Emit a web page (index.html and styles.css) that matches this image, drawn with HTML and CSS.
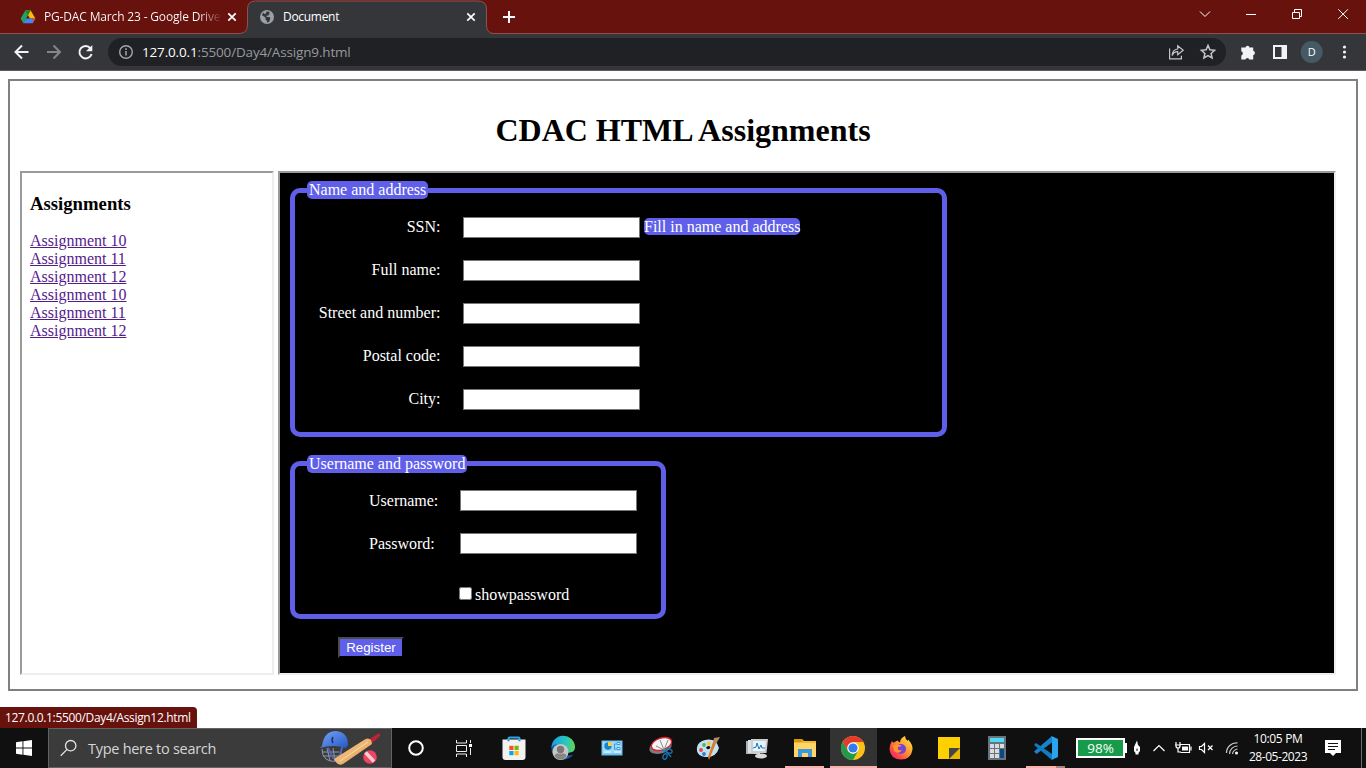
FILE: index.html
```html
<!DOCTYPE html>
<html lang="en">
<head>
<meta charset="utf-8">
<title>Document</title>
<link rel="stylesheet" href="styles.css">
</head>
<body>
<div class="screen">
  <header class="tabstrip">
    <div class="tab">
      <svg class="favicon" viewBox="0 0 16 16"><path d="M5.3 1.500h5.400l4.700 8.100H10z" fill="#fbbc04"/><path d="M3.300 14.200 5.900 9.600h9.500l-2.700 4.600z" fill="#4285f4"/><path d="M5.300 1.500 8 6.200 3.300 14.200.6 9.600z" fill="#1ea362"/><path d="M10.700 1.500H5.300L8 6.200z" fill="#188038"/><path d="M11.800 9.600h3.600l-1.900 3.200z" fill="#ea4335"/></svg>
      <span class="tab-title faded">PG-DAC March 23 - Google Drive</span>
      <svg class="close" viewBox="0 0 10 10"><path d="M1.300 1.300l7.400 7.400M8.700 1.300l-7.400 7.400"/></svg>
    </div>
    <div class="tab active">
      <svg class="tab-shape" viewBox="0 0 255 34"><path d="M-1 33.500Q7.500 33.500 7.500 25V9Q7.500 1 15.500 1H238Q246.500 1 246.500 9V25Q246.500 33.500 254 33.500V34H-1z" fill="#35363a"/><path d="M-1 33.500Q7.500 33.500 7.500 25V9Q7.500 1 15.500 1H238Q246.500 1 246.500 9V25Q246.500 33.500 254 33.500" fill="none" stroke="#8e514e"/></svg>
      <svg class="favicon" viewBox="0 0 16 16"><circle cx="8" cy="8" r="7" fill="#9aa0a6"/><path d="M7.500 2.500q3 0 3.500.6L9.700 4.300l1.200.5-1.700 1.700-2 .3.800 1.300h2.600l.7 1.400-1 3-2 1.200-.6-2.200-1.200-1V8.400L3 6.300q.3-1.800 1.700-2.800l.5 1.600 1.800-.7z" fill="#35363a"/></svg>
      <span class="tab-title">Document</span>
      <svg class="close" viewBox="0 0 10 10"><path d="M1.300 1.300l7.400 7.400M8.700 1.300l-7.400 7.400"/></svg>
    </div>
    <svg class="plus" viewBox="0 0 14 14"><path d="M7 1v12M1 7h12"/></svg>
    <svg class="window-controls" viewBox="0 0 150 34"><path d="M4 11.500l5 5 5-5M50 14.500h10M96.500 12.500h7v6h-7zM98.500 12.500v-3h7v7h-2M142.300 9.300l9.600 9.600M151.900 9.300l-9.600 9.600"/></svg>
  </header>

  <nav class="toolbar">
    <svg class="nav-icons" viewBox="0 0 100 36"><g fill="none" stroke-width="2"><path d="M28.500 18H16M22 11.500 15.500 18l6.500 6.500" stroke="#f1f3f4"/><path d="M47 18h12.500M53.500 11.500 60 18l-6.500 6.500" stroke="#85868a"/><path d="M90.500 14.300A6.200 6.200 0 1 0 91.600 20" stroke="#f1f3f4"/></g><path d="M92.300 11v6.300H86z" fill="#f1f3f4"/></svg>
    <div class="omnibox">
      <svg class="info" viewBox="0 0 16 16"><circle cx="8" cy="8" r="6.300" fill="none" stroke="#a4a7ab" stroke-width="1.400"/><path d="M7.250 7h1.500v4.500h-1.500zM7.250 4.300h1.500v1.600h-1.500z" fill="#a4a7ab"/></svg>
      <span class="url"><b>127.0.0.1</b>:5500/Day4/Assign9.html</span>
      <svg class="share" viewBox="0 0 50 20"><g fill="none" stroke="#c4c7c9" stroke-width="1.200"><path d="M2.600 6.500v10.300h11.800v-3M10.700 7V3.700l5.500 4.600-5.500 4.500V9.700q-4 0-5.500 3.800Q5.500 7.500 10.700 7z"/><path stroke-width="1.500" d="M41 3.400l1.900 4.300 4.700.5-3.500 3.200 1 4.600-4.100-2.400-4.100 2.400 1-4.600-3.500-3.200 4.700-.5z"/></g></svg>
    </div>
    <svg class="toolbar-icons" viewBox="0 0 126 36"><path d="M1.300 13.500h4.200a2.100 2.100 0 0 1 4.100 0h3.600v3.300a2.200 2.200 0 0 1 0 4.300v4.400H9.300a2 2 0 0 0-3.900 0H1.300v-4a2.200 2.200 0 0 0 0-4.200z" fill="#f1f3f4"/><path d="M33 11h14v14H33z" fill="#f1f3f4"/><path d="M35 13h6.500v10H35z" fill="#35363a"/><circle cx="71.700" cy="18" r="11" fill="#455a64"/><g fill="#f1f3f4"><circle cx="104.500" cy="13" r="1.600"/><circle cx="104.500" cy="18" r="1.600"/><circle cx="104.500" cy="23" r="1.600"/></g><text class="avatar" x="71.700" y="22" text-anchor="middle">D</text></svg>
  </nav>

  <main class="page">
    <h1>CDAC HTML Assignments</h1>
    <div class="frames">
      <section class="frame menu">
        <h3>Assignments</h3>
        <a>Assignment 10</a><a>Assignment 11</a><a>Assignment 12</a><a>Assignment 10</a><a>Assignment 11</a><a>Assignment 12</a>
      </section>
      <section class="frame content">
        <fieldset class="address">
          <legend>Name and address</legend>
          <div class="row"><label>SSN:</label><input type="text"><span class="hint">Fill in name and address</span></div>
          <div class="row"><label>Full name:</label><input type="text"></div>
          <div class="row"><label>Street and number:</label><input type="text"></div>
          <div class="row"><label>Postal code:</label><input type="text"></div>
          <div class="row"><label>City:</label><input type="text"></div>
        </fieldset>
        <fieldset class="account">
          <legend>Username and password</legend>
          <div class="row"><label>Username:</label><input type="text"></div>
          <div class="row"><label>Password:</label><input type="text"></div>
          <div class="show"><input type="checkbox"><span>showpassword</span></div>
        </fieldset>
        <button>Register</button>
      </section>
    </div>
  </main>

  <div class="status">127.0.0.1:5500/Day4/Assign12.html</div>

  <footer class="taskbar">
    <div class="start"><svg viewBox="0 0 16 16"><path d="M0 2.200 6.500 1.300v6.300H0zM7.400 1.200 16 0v7.600H7.400zM0 8.400h6.500v6.300L0 13.800zM7.400 8.400H16V16l-8.600-1.200z" fill="#fff"/></svg></div>
    <div class="search">
      <svg class="lens" viewBox="0 0 18 18"><circle cx="10.700" cy="6.700" r="5.200"/><path d="M7 10.400.8 16.700"/></svg>
      <span>Type here to search</span>
      <svg class="cricket" viewBox="0 0 62 36">
        <defs><linearGradient id="helmet" x2="1" y2="1"><stop stop-color="#78a5f5"/><stop offset="1" stop-color="#2456c8"/></linearGradient><linearGradient id="bat" x2="1" y2="1"><stop stop-color="#f8cf91"/><stop offset="1" stop-color="#e09b54"/></linearGradient></defs>
        <path d="M3 19q0 7 4 10 6 4 14 1l2-13M3 22h17M4 26h16M8 18l3 13M14 18l2 13" fill="none" stroke="#8f97a8" stroke-width="1"/>
        <path d="M9 18l5 10 7 1M23 18l-3 9" stroke="#5363b8" stroke-width="2" fill="none"/>
        <path d="M3 16Q5 1 17 1q12 1 12 14l-2 3Q14 14 1 18z" fill="url(#helmet)"/><path d="M14 7q-2 3 0 6" stroke="#163273" stroke-width="1.500" fill="none"/>
        <path d="M50 9.500 60 3l1.500 2.500-9 8z" fill="#c22236"/><path d="M15 29 45 10q4-3 7 0l1 4-29 20q-5 3-9-5z" fill="url(#bat)"/><path d="M21 31 49 12" stroke="#fbdda9"/>
        <circle cx="51" cy="27" r="6.800" fill="#f04361"/><path d="M46.500 22.500 55 31.500" stroke="#f9cdd3" stroke-width="3.500"/>
      </svg>
    </div>
    <div class="apps">
      <div class="app small"><svg viewBox="0 0 24 24"><circle cx="12" cy="12" r="6.800" fill="none" stroke="#fff" stroke-width="2"/></svg></div>
      <div class="app second"><svg viewBox="0 0 24 24"><path d="M4.500 4v3h10V4M4.500 9.500h10v6h-10zM4.500 21v-3h10v3M18.500 4v3M18.500 12v7" fill="none" stroke="#eee"/><path d="M17 8h3v3h-3z" fill="#fff"/></svg></div>
      <div class="app"><svg viewBox="0 0 24 24"><path d="M6.500 5V2.500q0-1 1-1h9q1 0 1 1V5" fill="none" stroke="#27a8ec" stroke-width="2"/><path d="M.5 3.500h23V21q0 3-3 3h-17q-3 0-3-3z" fill="#f2f2f2"/><path d="M6.500 3.500v1.700M17.500 3.500v1.700" stroke="#168dd0" stroke-width="2"/><path d="M7.300 9.800h4.200V14H7.300z" fill="#f35325"/><path d="M12.500 9.800h4.200V14h-4.200z" fill="#78b80b"/><path d="M7.300 15h4.200v4.200H7.300z" fill="#05a6f0"/><path d="M12.500 15h4.200v4.200h-4.200z" fill="#ffba08"/></svg></div>
      <div class="app"><svg viewBox="0 0 24 24"><defs><linearGradient id="edge"><stop stop-color="#159ee1"/><stop offset=".6" stop-color="#27c5c3"/><stop offset="1" stop-color="#62d84e"/></linearGradient></defs><path d="M.5 12A11.700 11.700 0 0 1 24 11q0 5-5 5.500-4 .5-5-1l-5-5z" fill="url(#edge)"/><path d="M.5 11q-1 9 8 12.500h5q5-.5 9-5-5 2-9 0L9 9Q4 7 .5 11z" fill="#135ba8"/><circle cx="9.500" cy="16" r="8" fill="#c8c6c5"/><circle cx="9.500" cy="13.400" r="3.700" fill="#797775"/><path d="M3.500 20q0-2.500 3-2.500h6q3 0 3 2.500-2.500 3.500-6 3.500t-6-3.500z" fill="#888583"/></svg></div>
      <div class="app shifted"><svg viewBox="0 0 24 24"><path d="M1.500 4.500h21v15h-21z" fill="#68bdec"/><path d="M2.500 5.500h19v12h-19z" fill="#9ed9fa"/><circle cx="8" cy="10" r="3.700" fill="#1685cf"/><path d="M8 10V6a4 4 0 0 1 4 4z" fill="#ffd42a"/><path d="M4 16h7M14 16h7" stroke="#eefaff"/><path d="M14.500 8v5.500M14.500 8h2M14.500 13h2M17 6.500h3v2h-3zM17 11.500h3v2h-3z" fill="#dff5ff" stroke="#258acb" stroke-width=".8"/></svg></div>
      <div class="app shifted"><svg viewBox="0 0 24 24"><ellipse cx="11.500" cy="11" rx="11.500" ry="6.500" transform="rotate(-15 11.500 11)" fill="#797b80"/><ellipse cx="12.500" cy="8" rx="10.500" ry="5.900" transform="rotate(-18 12.500 8)" fill="#f4f4f4" stroke="#d5242c" stroke-width="1.300"/><path d="M11 4l4 10M19 4l-4 10-8-4" stroke="#868b90" fill="none"/><g fill="none" stroke="#1678b6" stroke-width="1.300"><ellipse cx="20" cy="15" rx="3.200" ry="2" transform="rotate(15 20 15)"/><ellipse cx="16" cy="20.500" rx="2" ry="2.800" transform="rotate(20 16 20.500)"/><path d="M13 14l5 2 4 5"/></g></svg></div>
      <div class="app"><svg viewBox="0 0 24 24"><path d="M1 15Q0 8 6 5t14 0l3 7q-3 10-14 9-7-1-8-6zm9-3.500q1 3 4 1 1-3-2-2.500z" fill="#c1e2f4" fill-rule="evenodd"/><circle cx="5" cy="14" r="1.900" fill="#e94341"/><circle cx="8" cy="9" r="1.900" fill="#62b448"/><circle cx="13" cy="7.500" r="2" fill="#f4c63c"/><circle cx="8" cy="18" r="1.900" fill="#327fc7"/><path d="M20 7 13 24l-1-3 5-15z" fill="#e57820"/><path d="M17 7l1-5 6-1-4 7z" fill="#b98a62"/></svg></div>
      <div class="app shifted"><svg viewBox="0 0 24 24"><path d="M1 5h14v13H1z" fill="#aeb2b5"/><path d="M3 4h12v14l-12-1z" fill="#dde1e3"/><path d="m6 3 17 0-1.500 14L6 17z" fill="#c9cdd0"/><path d="M8 5h13l-1.500 10H8z" fill="#e7f4fb"/><path d="M8 12l3-1 1-4 2 6 2-4 1 3h3" fill="none" stroke="#197aba"/><ellipse cx="16" cy="20" rx="6" ry="2.500" fill="#d7d9da"/></svg></div>
      <div class="app running shifted"><svg viewBox="0 0 24 24"><path d="M1 3h8l2 2h12v16H1z" fill="#f5b82e"/><path d="M1 3h8l1 2-1 1H1z" fill="#da980e"/><path d="M1 7h22v14H1z" fill="#ffd566"/><path d="M5 13h14v8h-4v-4H9v4H5z" fill="#3b98dc"/></svg></div>
      <div class="app current"><svg viewBox="0 0 24 24"><circle cx="12" cy="12" r="12" fill="#fbc116"/><path d="M1.600 6A12 12 0 0 1 22.400 6H12L7 15z" fill="#e33b2e"/><path d="M1.600 6A12 12 0 0 0 12 24l5-9-5 3-5-3z" fill="#229a4b"/><circle cx="12" cy="12" r="5.800" fill="#fff"/><circle cx="12" cy="12" r="4.600" fill="#317df0"/></svg></div>
      <div class="app"><svg viewBox="0 0 24 24"><defs><linearGradient id="fox" x1="1" x2="0" y2="1"><stop stop-color="#fff044"/><stop offset=".45" stop-color="#ff9633"/><stop offset=".75" stop-color="#ff4347"/><stop offset="1" stop-color="#e31587"/></linearGradient></defs><path d="M3 5q1 2 2 1.500Q7 5 9 4.500 9 6 11 6.500 11 2 16 0q0 3 3 5V3.500q5 5 4.500 10Q22 23.500 12 23.500 1 23 .5 13q0-4 2.500-8z" fill="url(#fox)"/><circle cx="12" cy="13" r="5" fill="#7542d5"/><path d="M4 9q6-1.500 9 1l-4 1q-1 4 4 3-3 5-8 1z" fill="#ff942d"/></svg></div>
      <div class="app"><svg viewBox="0 0 24 24"><path d="M1 1h22v22H1z" fill="#ffd000"/><path d="M12 12h11v11H12z" fill="#e9b900"/><path d="M12 12h11L12 23z" fill="#454545"/></svg></div>
      <div class="app"><svg viewBox="0 0 24 24"><path d="M3 0h18v24H3z" fill="#68737c"/><path d="M5 2h14v4H5z" fill="#50d9f5"/><g fill="#d9dde1"><path d="M5 8h4v4H5zM10 8h4v4h-4zM15 8h4v4h-4zM5 13h4v4H5zM10 13h4v4h-4zM5 18h4v4H5zM10 18h4v4h-4z"/></g><path d="M15 13h4v9h-4z" fill="#094a84"/></svg></div>
      <div class="app running grouped"><svg viewBox="0 0 24 24"><path d="M0 15.500 18 0v6.500L2.500 18z" fill="#1683ca"/><path d="m0 9 2-2 16 11v6z" fill="#0f7cc4"/><path d="M17.500 0 24 3v18l-6.500 3 .5-1.500V2z" fill="#2ba4ee"/></svg></div>
    </div>
    <div class="battery"><span>98%</span></div>
    <svg class="tray" viewBox="0 0 112 40"><path d="M8 12.500l-3 6.500v4l1.500 2v1.500h3V25l1.500-2v-4l-2-2z" fill="#fff"/><path d="M8 20.500v2.500" stroke="#111"/><g fill="none" stroke="#fff" stroke-width="1.200"><path d="M24.500 23l5.500-5.500 5.500 5.500"/><path d="M50.500 16.500h10v8h-9M47 14v4q0 2 2 2t2-2v-4M46 17h6M49 20v4h3M62 18.500v4M70.500 18.500h2l3-3v9l-3-3h-2zM79 17.500l4.500 4.500M83.500 17.500 79 22"/></g><path d="M53 18.500h6v4h-6z" fill="#fff"/><g fill="none" stroke="#c9c9c9" stroke-width="1.200"><path d="M97.500 25A10 10 0 0 1 108.500 15M100.500 26A8 8 0 0 1 108.500 18M103.500 26Q104 22 108.500 21"/></g><circle cx="107.500" cy="25" r="1.500" fill="#fff"/></svg>
    <div class="clock"><span class="time">10:05 PM</span><span class="date">28-05-2023</span></div>
    <svg class="notice" viewBox="0 0 16 16"><path d="M0 0h16v13h-5l-3 3-3-3H0z" fill="#fff"/><path d="M3 3.500h10M3 6.500h10M3 9.500h7" stroke="#111"/></svg>
  </footer>
</div>
</body>
</html>
```

FILE: styles.css
```css
* { box-sizing: border-box; }
body { margin: 0; background: #fff; font-family: "Liberation Serif", serif; font-size: 16px; }
svg { display: block; flex: none; overflow: visible; }
.screen { position: relative; width: 1366px; height: 768px; overflow: hidden; display: flex; flex-direction: column; }

.tabstrip { height: 34px; background: #68120e; border-bottom: 1px solid #8e514e; display: flex; align-items: flex-start; font: 12px "Open Sans", sans-serif; color: #fff; }
.tab { position: relative; height: 34px; width: 240px; display: flex; align-items: center; padding-left: 20px; }
.tab.active { width: 247px; padding-left: 19px; }
.tab-shape { position: absolute; left: 0; top: 0; width: 255px; height: 34px; }
.favicon { position: relative; width: 16px; height: 16px; margin-right: 8px; }
.tab-title { position: relative; width: 176px; height: 18px; line-height: 18px; letter-spacing: -0.16px; white-space: nowrap; overflow: hidden; }
.active .tab-title { width: 183px; letter-spacing: -0.3px; }
.faded { background: linear-gradient(90deg, #fff 155px, transparent 178px); background-clip: text; color: transparent; }
.close { position: relative; width: 10px; height: 10px; margin-left: 7px; fill: none; stroke: #fff; stroke-width: 1.7; }
.active .close { margin-left: 0; }
.plus { width: 14px; height: 14px; margin: 10px 0 0 15px; stroke: #fff; stroke-width: 2; }
.window-controls { width: 150px; height: 34px; margin-left: auto; margin-right: 20px; fill: none; stroke: #fff; stroke-width: 1; }

.toolbar { height: 37px; background: #35363a; border-bottom: 1px solid #5b5b60; display: flex; align-items: center; font-family: "Open Sans", sans-serif; }
.nav-icons { width: 100px; height: 36px; }
.omnibox { width: 1118px; height: 28px; margin-left: 8px; padding: 0 9px 0 10px; border-radius: 14px; background: #202124; display: flex; align-items: center; }
.info { width: 16px; height: 16px; margin-right: 8px; }
.url { color: #969a9e; font-size: 13.5px; letter-spacing: -0.16px; line-height: 20px; }
.url b { color: #fff; font-weight: 400; }
.share { width: 50px; height: 20px; margin-left: auto; }
.toolbar-icons { width: 126px; height: 36px; margin-left: 14px; }
.avatar { fill: #fff; font-size: 11px; }

.page { width: 1350px; height: 612px; margin: 8px; border: 2px solid #808080; padding: 10px; }
h1 { margin: 21px 0 23px; height: 36px; line-height: 36px; font-size: 32px; text-align: center; }
.frames { display: flex; gap: 4px; }
.frame { height: 504px; border: 2px solid; border-color: #9a9a9a #eee #eee #9a9a9a; }
.menu { width: 254px; padding: 8px; display: flex; flex-direction: column; }
h3 { margin: 12px 0 18px; font-size: 18.72px; line-height: 21px; }
.menu a { color: #551a8b; text-decoration: underline; line-height: 18px; }
.content { width: 1058px; background: #000; color: #fff; padding: 8px 10px; }
fieldset { margin: 0; padding: 18px 12px 0; border: 5px solid #5f5fe9; border-radius: 10px; min-width: 0; }
.address { width: 657px; height: 256px; margin-bottom: 17.6px; }
.account { width: 376px; height: 164.4px; padding-top: 17.4px; margin-bottom: 18px; }
legend { height: 18px; padding: 0 2px; background: #5f5fe9; border-radius: 5px; line-height: 18px; color: #fff; }
.row { display: flex; align-items: flex-start; height: 21px; margin-bottom: 22px; }
.row label { width: 133.5px; margin: 1px 22.5px 0 0; text-align: right; line-height: 18px; }
.account .row { padding-left: 62px; }
.account label { width: 69px; margin: 2px 22px 0 0; text-align: left; }
input[type="text"] { width: 177px; height: 21px; margin: 0; padding: 1px 2px; border: 1px solid #767676; background: #fff; }
.hint { margin: 1px 0 0 4px; height: 17px; line-height: 17px; background: #5f5fe9; border-radius: 5px; }
.show { display: flex; align-items: center; height: 18px; margin-top: 32px; padding-left: 152px; }
.show input { width: 13px; height: 13px; margin: -3px 3px 0 0; }
button { display: block; margin-left: 48px; width: 66px; height: 21px; padding: 0; background: #5f5fe9; color: #fff; border: 2px solid; border-color: #4b4b4b #000 #000 #4b4b4b; font: 13.33px/17px "Liberation Sans", sans-serif; }

.status { position: absolute; left: 0; top: 707px; width: 197px; height: 21px; padding-left: 5px; border-radius: 0 4px 0 0; background: #68120e; color: #fff; font: 12px/21px "Open Sans", sans-serif; letter-spacing: -0.34px; white-space: nowrap; }
.taskbar { position: absolute; left: 0; top: 728px; width: 1366px; height: 40px; background: #101010; display: flex; align-items: center; font-family: "Open Sans", sans-serif; color: #fff; }
.start { width: 48px; padding-left: 16px; }
.start svg { width: 16px; height: 16px; }
.search { width: 344px; height: 40px; border: 1px solid #626262; background: #3b3b3b; display: flex; align-items: center; padding-left: 11px; color: #d6d6d6; font-size: 14.5px; }
.lens { width: 18px; height: 18px; margin-right: 10px; fill: none; stroke: #e4e4e4; stroke-width: 1.3; }
.search span { width: 231px; letter-spacing: -0.28px; }
.cricket { width: 62px; height: 36px; }
.apps { display: flex; width: 678px; height: 40px; flex: none; }
.app { width: 48.25px; height: 40px; flex: none; display: flex; align-items: center; justify-content: center; }
.app svg { width: 24px; height: 24px; }
.small { width: 48px; }
.second { width: 50px; padding-right: 2px; }
.second + .app { width: 49px; padding-right: 1px; }
.shifted { padding-left: 2px; }
.running { background: linear-gradient(#f5b1aa, #f5b1aa) 5px 38px / 39px 2px no-repeat; }
.current { width: 47px; margin: 0 .2px 0 1px; background: #333; border-bottom: 2px solid #f5b1aa; padding-top: 2px; }
.grouped { background: linear-gradient(90deg, #f5b1aa 30px, #ad817c 30px) 5px 38px / 39px 2px no-repeat; }
.battery { position: relative; width: 49px; height: 20px; margin-left: 6px; border: 2px solid #fff; background: #169b4a; font-size: 13.5px; line-height: 16px; text-align: center; flex: none; }
.battery::after { content: ""; position: absolute; left: 47px; top: 3px; width: 2px; height: 10px; background: #fff; }
.tray { width: 112px; height: 40px; margin-left: 4px; }
.clock { width: 80px; margin-left: -3px; display: flex; flex-direction: column; align-items: center; font-size: 12px; line-height: 18px; }
.time { letter-spacing: -0.35px; }
.date { letter-spacing: -0.45px; }
.notice { width: 16px; height: 16px; margin-left: 7px; }
.taskbar::after { content: ""; height: 40px; border-left: 1px solid #6b6b6b; margin-left: auto; margin-right: 4px; }
```
